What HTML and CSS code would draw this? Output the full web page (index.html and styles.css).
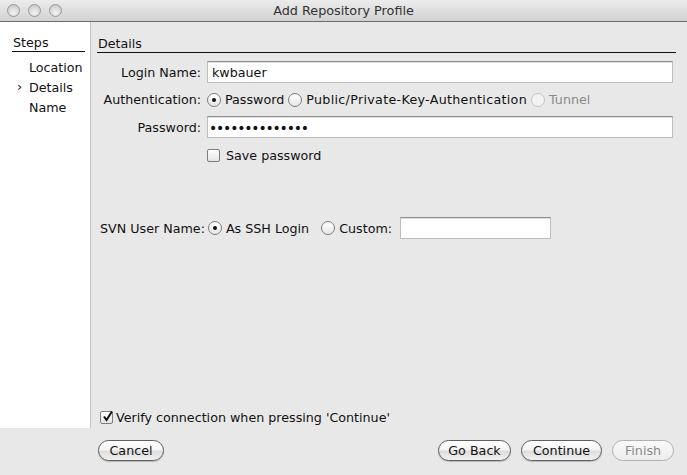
FILE: index.html
```html
<!DOCTYPE html>
<html>
<head>
<meta charset="utf-8">
<link rel="stylesheet" href="styles.css">
<title>Add Repository Profile</title>
</head>
<body>
<div class="window">
  <div class="titlebar">
    <div class="lights">
      <span class="light"></span><span class="light"></span><span class="light"></span>
    </div>
    <div class="title">Add Repository Profile</div>
  </div>
  <div class="content">
    <aside class="sidebar">
      <div class="steps-head">Steps</div>
      <ul class="steps">
        <li>Location</li>
        <li class="current">Details</li>
        <li>Name</li>
      </ul>
    </aside>
    <main class="main">
      <div class="section-head">Details</div>
      <div class="form">
        <label class="lbl">Login Name:</label>
        <div class="field"><input class="text" type="text" value="kwbauer"></div>
        <label class="lbl">Authentication:</label>
        <div class="field">
          <span class="radio on"></span><span class="rtext">Password</span>
          <span class="radio"></span><span class="rtext wide">Public/Private-Key-Authentication</span>
          <span class="radio disabled"></span><span class="rtext dim">Tunnel</span>
        </div>
        <label class="lbl">Password:</label>
        <div class="field"><input class="text pw" type="password" value="kwbauerpasswd1"></div>
        <span></span>
        <div class="field"><span class="checkbox"></span><span class="ctext">Save password</span></div>
      </div>
      <div class="svn-row">
        <span class="svn-lbl">SVN User Name:</span>
        <span class="radio on"></span><span class="rtext">As SSH Login</span>
        <span class="radio gap"></span><span class="rtext">Custom:</span>
        <input class="text small" type="text" value="">
      </div>
      <div class="spacer"></div>
      <div class="verify"><span class="checkbox checked"><svg viewBox="0 0 13 13" width="13" height="13"><path d="M3 6.5 L5.5 10 L11 1.5" fill="none" stroke="#111" stroke-width="2"/></svg></span><span class="ctext">Verify connection when pressing 'Continue'</span></div>
      <div class="buttons">
        <button class="btn cancel">Cancel</button>
        <div class="btn-group">
          <button class="btn back">Go Back</button>
          <button class="btn cont">Continue</button>
          <button class="btn fin" disabled>Finish</button>
        </div>
      </div>
    </main>
  </div>
</div>
</body>
</html>
```
FILE: styles.css
```css
html, body { margin: 0; padding: 0; }
body {
  width: 687px; height: 475px; overflow: hidden;
  font-family: "DejaVu Sans", "Liberation Sans", sans-serif;
  font-size: 12.7px; color: #111;
}
.window { width: 687px; height: 475px; background: #e8e8e8; display: flex; flex-direction: column; }
.titlebar {
  height: 21px; border-bottom: 1px solid #6c6c6c;
  background: linear-gradient(#ececec, #d2d2d2);
  display: flex; align-items: center; position: relative;
}
.lights { display: flex; gap: 8px; padding-left: 7px; }
.light {
  width: 13px; height: 13px; border-radius: 50%; box-sizing: border-box;
  border: 1px solid #9a9a9a;
  background: radial-gradient(circle at 50% 70%, #f4f4f4 0, #d8d8d8 55%, #bcbcbc 100%);
}
.title { position: absolute; left: 0; right: 0; text-align: center; top: 3px; color: #333; font-size: 12.8px; }
.content { flex: 1; display: flex; }
.sidebar {
  width: 91px; height: 406px; background: #fff; border-right: 1px solid #c4c4c4;
  box-sizing: border-box; padding: 13px 0 0 12px;
}
.steps-head { width: 72px; border-bottom: 1px solid #111; padding-bottom: 1px; padding-left: 1px; }
.steps { list-style: none; margin: 8px 0 0; padding: 0 0 0 17px; }
.steps li { height: 20px; line-height: 16px; position: relative; }
.steps li.current::before { content: "›"; position: absolute; left: -12px; top: -1px; font-size: 13px; }
.main { flex: 1; display: flex; flex-direction: column; padding: 13px 10px 0 6px; }
.section-head { border-bottom: 1px solid #111; padding: 1px 0 1px 1px; width: 578px; }
.form {
  display: grid; grid-template-columns: 104px 1fr; grid-template-rows: 22px 33px 22px 34px;
  column-gap: 6px; margin-top: 8px; align-items: center; width: 569px;
}
.lbl { text-align: right; }
.field { display: flex; align-items: center; white-space: nowrap; }
.text {
  box-sizing: border-box; width: 466px; height: 22px; border: 1px solid #bdbdbd; border-top-color: #8e8e8e;
  box-shadow: inset 0 1px 0 #e0e0e0; background: #fff; font: inherit; padding: 1px 4px 0; color: #111; outline: none;
}
.text.pw { font-size: 14px; letter-spacing: -1.2px; padding-left: 1px; }
.radio {
  width: 14px; height: 14px; border-radius: 50%; box-sizing: border-box;
  border: 1px solid #7d7d7d; background: linear-gradient(#ffffff, #e6e6e6);
  margin-right: 4px; position: relative; display: inline-block; flex: none;
}
.radio.on::after { content: ""; position: absolute; left: 4px; top: 4px; width: 4px; height: 4px; border-radius: 50%; background: #111; }
.radio.disabled { border-color: #c4c4c4; background: #f2f2f2; }
.rtext { margin-right: 4px; }
.rtext.wide { letter-spacing: 0.3px; }
.dim { color: #8a8a8a; }
.checkbox {
  width: 13px; height: 13px; box-sizing: border-box; border: 1px solid #7d7d7d; border-radius: 2px;
  background: linear-gradient(#ffffff, #e4e4e4); margin-right: 6px; position: relative; flex: none;
}
.checkbox svg { position: absolute; left: 0; top: -2px; }
.svn-row { display: flex; align-items: center; margin-top: 45px; padding-left: 3px; white-space: nowrap; }
.svn-lbl { margin-right: 3px; }
.radio.gap { margin-left: 8px; }
.text.small { width: 151px; height: 22px; margin-left: 4px; }
.spacer { flex: 1; }
.verify { display: flex; align-items: center; padding-left: 3px; }
.verify .checkbox { margin-right: 3px; }
.buttons { display: flex; justify-content: space-between; align-items: center; margin: 15px 3px 14px 1px; }
.btn-group { display: flex; gap: 10px; }
.btn {
  height: 21px; border: 1px solid #5e5e5e; border-radius: 11px; box-sizing: border-box;
  background: linear-gradient(#ffffff 0%, #f4f4f4 45%, #dedede 55%, #f0f0f0 100%);
  font: inherit; color: #111; padding: 0; line-height: 18px; white-space: nowrap;
  box-shadow: 0 1px 1px rgba(0,0,0,0.2);
}
.btn.cancel { width: 66px; }
.btn.back { width: 73px; }
.btn.cont { width: 81px; }
.btn.fin { width: 62px; color: #8a8a8a; border-color: #b0b0b0; box-shadow: none; background: linear-gradient(#fafafa, #ececec); }
```
